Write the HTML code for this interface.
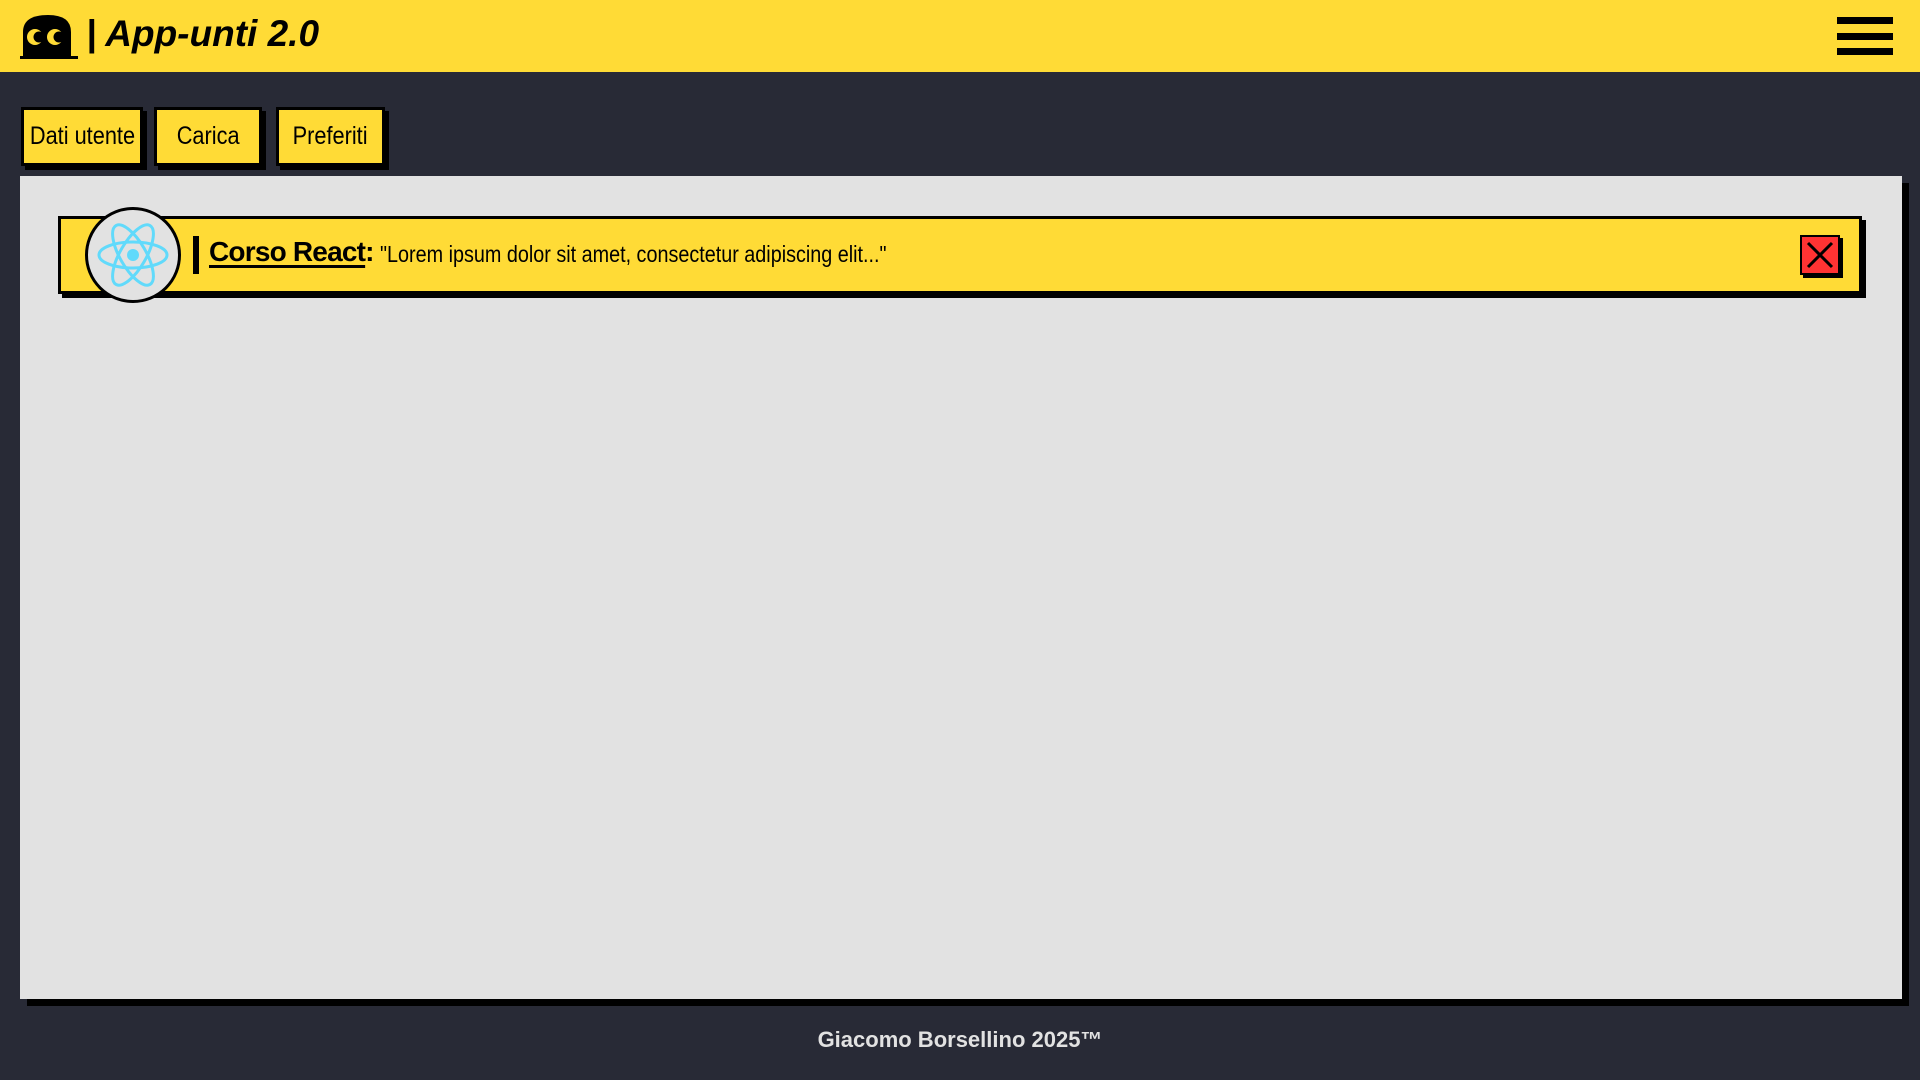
<!DOCTYPE html>
<html><head><meta charset="utf-8"><style>
*{margin:0;padding:0;box-sizing:border-box}
body{width:1920px;height:1080px;background:#282a36;position:relative;overflow:hidden;font-family:"Liberation Sans",sans-serif}
.hdr{position:absolute;left:0;top:0;width:1920px;height:72px;background:#ffdb36}
.title{position:absolute;left:86px;top:13px;font-size:37px;font-weight:bold;font-style:italic;color:#000;white-space:nowrap}
.ham{position:absolute;left:1837px;width:56px;height:7px;background:#000}
.btn{position:absolute;top:107px;height:59px;background:#ffdb36;border:3px solid #000;box-shadow:4px 4px 0 #000;display:flex;align-items:center;justify-content:center;color:#000;white-space:nowrap;overflow:visible}
.btn span{display:inline-block;font-size:25px;transform:scaleX(0.87);white-space:nowrap}
.panel{position:absolute;left:20px;top:176px;width:1882px;height:823px;background:#e2e2e2;box-shadow:7px 7px 0 #000}
.card{position:absolute;left:58px;top:216px;width:1804px;height:78px;background:#ffdb36;border:3px solid #000;box-shadow:4px 4px 0 #000}
.circ{position:absolute;left:85px;top:207px;width:96px;height:96px;border-radius:50%;background:#e2e2e2;border:3px solid #000}
.bar{position:absolute;left:193px;top:236px;width:6px;height:38px;background:#000}
.ct{position:absolute;left:209px;top:236px;white-space:nowrap;color:#000}
.ct b{font-size:28px;letter-spacing:-0.8px}
.ct b.u{text-decoration:underline;text-decoration-thickness:3px;text-underline-offset:4px}
.q{position:absolute;left:380px;top:241px;font-size:23px;white-space:nowrap;transform:scaleX(0.86);transform-origin:0 0;color:#000}
.x{position:absolute;left:1800px;top:235px;width:40px;height:40px;background:#ff3333;border:2px solid #000;box-shadow:3px 3px 0 #000}
.foot{position:absolute;left:0;width:1920px;top:1027px;text-align:center;color:#e2e2e2;font-weight:bold;font-size:22px}
</style></head><body>
<div class="hdr">
<svg style="position:absolute;left:20px;top:12px" width="58" height="50" viewBox="0 0 58 50">
<path d="M3 46 L3 20 Q3 3 28 3 Q51 3 51 20 L51 46 Z" fill="#000"/>
<rect x="0" y="44" width="58" height="3" fill="#000"/>
<circle cx="15" cy="25" r="8" fill="#ffdb36"/><circle cx="19" cy="25" r="5.5" fill="#000"/>
<circle cx="35" cy="25" r="8" fill="#ffdb36"/><circle cx="39" cy="25" r="5.5" fill="#000"/>
</svg>
<div class="title">| App-unti 2.0</div>
<div class="ham" style="top:17px"></div><div class="ham" style="top:33px"></div><div class="ham" style="top:48px"></div>
</div>
<div class="btn" style="left:21px;width:122px"><span>Dati utente</span></div>
<div class="btn" style="left:154px;width:108px"><span>Carica</span></div>
<div class="btn" style="left:276px;width:109px"><span>Preferiti</span></div>
<div class="panel"></div>
<div class="card"></div>
<div class="circ"><svg width="90" height="90" viewBox="-45 -45 90 90">
<g fill="none" stroke="#61dafb" stroke-width="3"><ellipse rx="34" ry="13"/><ellipse rx="34" ry="13" transform="rotate(60)"/><ellipse rx="34" ry="13" transform="rotate(120)"/></g>
<circle r="6" fill="#61dafb"/></svg></div>
<div class="bar"></div>
<div class="ct"><b class="u">Corso React</b><b>:</b></div>
<div class="q">"Lorem ipsum dolor sit amet, consectetur adipiscing elit..."</div>
<div class="x"><svg width="36" height="36" viewBox="0 0 36 36"><path d="M6 6L30 30M30 6L6 30" stroke="#000" stroke-width="3"/></svg></div>
<div class="foot">Giacomo Borsellino 2025™</div>
</body></html>
